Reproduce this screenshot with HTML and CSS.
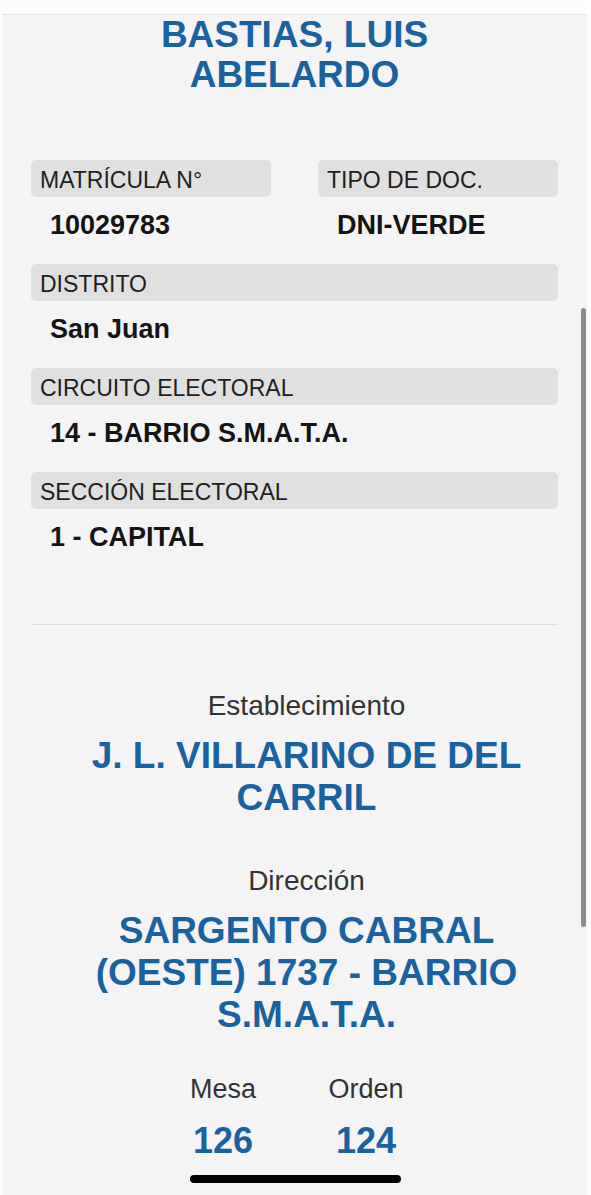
FILE: index.html
```html
<!DOCTYPE html>
<html lang="es">
<head>
    <meta charset="UTF-8">
    <meta name="viewport" content="width=device-width, initial-scale=1.0">
    <title>Padrón Electoral</title>
    <link rel="stylesheet" href="styles.css">
</head>
<body>
    <div class="sheet">
        <div class="topbar"></div>

        <div class="content">
            <h1 class="name">BASTIAS, LUIS ABELARDO</h1>

            <div class="fields">
                <div class="pair">
                    <div class="field">
                        <div class="label">MATRÍCULA N°</div>
                        <div class="value">10029783</div>
                    </div>
                    <div class="field">
                        <div class="label">TIPO DE DOC.</div>
                        <div class="value">DNI-VERDE</div>
                    </div>
                </div>
                <div class="field">
                    <div class="label">DISTRITO</div>
                    <div class="value">San Juan</div>
                </div>
                <div class="field">
                    <div class="label">CIRCUITO ELECTORAL</div>
                    <div class="value">14 - BARRIO S.M.A.T.A.</div>
                </div>
                <div class="field">
                    <div class="label">SECCIÓN ELECTORAL</div>
                    <div class="value">1 - CAPITAL</div>
                </div>
            </div>

            <hr class="divider">

            <div class="place">
                <div class="venue">
                    <div class="caption">Establecimiento</div>
                    <div class="big">J. L. VILLARINO DE DEL CARRIL</div>

                    <div class="caption second">Dirección</div>
                    <div class="big">SARGENTO CABRAL (OESTE) 1737 - BARRIO S.M.A.T.A.</div>
                </div>

                <div class="numbers">
                    <div class="num">
                        <div class="num-label">Mesa</div>
                        <div class="num-value">126</div>
                    </div>
                    <div class="num">
                        <div class="num-label">Orden</div>
                        <div class="num-value">124</div>
                    </div>
                </div>
            </div>
        </div>

        <div class="scroll-indicator"></div>
        <div class="home-indicator"></div>
    </div>
</body>
</html>
```

FILE: styles.css
```css
body {
    margin: 0;
    padding: 0;
    background-color: #fdfdfd;
    font-family: "Liberation Sans", Arial, Helvetica, sans-serif;
}

.sheet {
    position: relative;
    margin: 0 4px 0 2px;
    height: 1195px;
    overflow: hidden;
    background-color: #f4f4f4;
}

.topbar {
    height: 14px;
    background-color: #fcfcfc;
    border-bottom: 1px solid #e3e3e3;
}

.content {
    padding: 0 29px;
}

.name {
    margin: 0;
    padding: 0 60px;
    font-size: 37px;
    line-height: 40px;
    font-weight: bold;
    text-align: center;
    color: #1a61a0;
}

.fields {
    display: flex;
    flex-direction: column;
    gap: 23px;
    margin-top: 65px;
}

.pair {
    display: grid;
    grid-template-columns: 1fr 1fr;
    column-gap: 47px;
}

.label {
    height: 37px;
    box-sizing: border-box;
    padding: 3px 9px 0;
    line-height: 34px;
    font-size: 23px;
    color: #1e1e1e;
    background-color: #e0e0e0;
    border-radius: 5px;
}

.value {
    margin-top: 12px;
    padding-left: 19px;
    font-size: 27px;
    line-height: 32px;
    font-weight: bold;
    color: #141414;
}

.divider {
    margin: 71px 0 0;
    border: none;
    border-top: 1px solid #dcdcdc;
}

.place {
    text-align: center;
    padding-top: 64px;
}

.venue {
    padding-left: 24px;
}

.caption {
    font-size: 28px;
    line-height: 34px;
    color: #333;
}

.caption.second {
    margin-top: 45px;
}

.big {
    margin-top: 12px;
    font-size: 37px;
    line-height: 42px;
    font-weight: bold;
    color: #1a61a0;
}

.numbers {
    display: grid;
    grid-template-columns: 143px 143px;
    justify-content: center;
    margin-top: 37px;
}

.num-label {
    font-size: 27px;
    line-height: 32px;
    color: #333;
}

.num-value {
    margin-top: 16px;
    font-size: 36px;
    line-height: 40px;
    font-weight: bold;
    color: #1a61a0;
}

/* iOS overlays */
.scroll-indicator {
    position: absolute;
    left: 579px;
    top: 308px;
    width: 5px;
    height: 619px;
    background-color: #8c8c8c;
    border-radius: 3px;
}

.home-indicator {
    position: absolute;
    left: 188px;
    top: 1175px;
    width: 211px;
    height: 8px;
    background-color: #000;
    border-radius: 4px;
}
```
